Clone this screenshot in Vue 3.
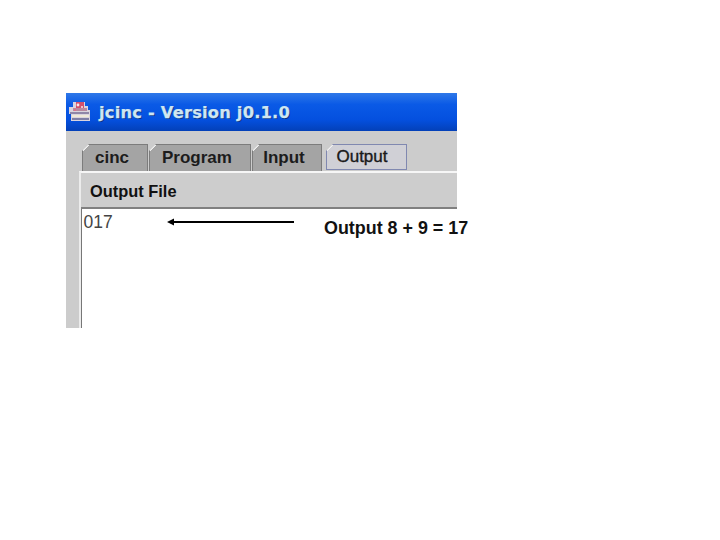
<template>
  <div class="page">
    <div class="window">
      <div class="titlebar">
        <svg class="app-icon" width="24" height="24" viewBox="0 0 24 24">
          <path d="M5 2 H17 V6 H20 V10 H22 V21 H3 V14 H1 V7 H5 Z" fill="#d9d4de" />
          <rect x="8" y="2" width="8" height="6" fill="#d2506c" />
          <rect x="5" y="8" width="14" height="3" fill="#b88aa0" />
          <rect x="2" y="12" width="19" height="2" fill="#8f87a8" />
          <rect x="4" y="15" width="17" height="2" fill="#efe9d8" />
          <rect x="4" y="18" width="17" height="2" fill="#7f7fa6" />
          <circle cx="10" cy="5" r="1.4" fill="#f6e8ec" />
          <circle cx="14" cy="7" r="1" fill="#f6e8ec" />
          <circle cx="7" cy="10" r="1" fill="#e46a86" />
        </svg>
        <span class="title">jcinc - Version j0.1.0</span>
      </div>
      <div class="body">
        <div class="tabs">
          <div v-for="tab in tabs" :key="tab.name" class="tab" :class="{ active: tab.active }" :style="{ width: tab.width + 'px' }">
            {{ tab.name }}
          </div>
        </div>
        <div class="panel">
          <div class="panel-head">Output File</div>
          <div class="output">017</div>
        </div>
      </div>
    </div>
    <svg class="arrow" width="130" height="10" viewBox="0 0 130 10">
      <path d="M0 5 L7 1.5 L7 8.5 Z" fill="#000" />
      <path d="M4 5 H127" stroke="#000" stroke-width="1.8" />
    </svg>
    <div class="caption">Output 8 + 9 = 17</div>
  </div>
</template>

<script setup>
const tabs = [
  { name: "cinc", width: 66 },
  { name: "Program", width: 102 },
  { name: "Input", width: 70 },
  { name: "Output", width: 81, active: true },
];
</script>

<style scoped>
.page {
  position: relative;
  width: 720px;
  height: 540px;
  padding: 93px 0 0 66px;
  box-sizing: border-box;
  background: #fff;
  overflow: hidden;
}
.window {
  width: 391px;
  height: 235px;
  display: flex;
  flex-direction: column;
  background: #cccccc;
}
.titlebar {
  height: 38px;
  flex: none;
  display: flex;
  align-items: center;
  gap: 7px;
  padding: 0 0 0 2px;
  box-sizing: border-box;
  background: linear-gradient(180deg, #2f78e8 0%, #0a5ae6 30%, #0450df 70%, #0340b8 100%);
}
.app-icon {
  flex: none;
}
.title {
  font-family: "DejaVu Sans", sans-serif;
  font-weight: 700;
  font-size: 16.3px;
  letter-spacing: 0.2px;
  white-space: nowrap;
  color: #cfe6f2;
  -webkit-text-stroke: 0.25px #cfe6f2;
  text-shadow: 1px 1px 0 #0a2f80;
}
.body {
  flex: 1;
  display: flex;
  flex-direction: column;
  min-height: 0;
  padding: 13px 0 0 14px;
}
.tabs {
  display: flex;
  height: 27px;
  flex: none;
  padding-left: 2px;
}
.tab {
  box-sizing: border-box;
  height: 27px;
  display: flex;
  align-items: center;
  justify-content: center;
  padding-right: 6px;
  font-family: "Liberation Sans", Arial, sans-serif;
  font-size: 17px;
  font-weight: 700;
  white-space: nowrap;
  color: #1c1c1c;
  background: linear-gradient(135deg, #f0f0f0 6px, #a4a4a4 6px);
  background-origin: border-box;
  border: 1px solid #7c7c7c;
  border-bottom: none;
  clip-path: polygon(7px 0, 100% 0, 100% 100%, 0 100%, 0 7px);
  margin-right: 1px;
}
.tab.active {
  height: 26px;
  margin-left: 3px;
  margin-right: 0;
  padding-right: 9px;
  background: linear-gradient(135deg, #f0f0f0 6px, #d0d0d6 6px);
  background-origin: border-box;
  border: 1px solid #8088b0;
  font-weight: 400;
  font-size: 17px;
  -webkit-text-stroke: 0.35px #111;
}
.panel {
  flex: 1;
  min-height: 0;
  display: flex;
  flex-direction: column;
  margin-left: -1px;
  border-top: 2px solid #f6f6f6;
  border-left: 2px solid #ececec;
}
.panel-head {
  height: 36px;
  flex: none;
  box-sizing: border-box;
  padding: 9px 0 0 9px;
  font-family: "Liberation Sans", Arial, sans-serif;
  font-size: 16.4px;
  font-weight: 700;
  line-height: 19px;
  color: #111;
  background: #cdcdcd;
  border-bottom: 2px solid #808080;
}
.output {
  flex: 1;
  background: #fff;
  border-left: 1.5px solid #777;
  padding: 4px 0 0 1.5px;
  font-family: "Liberation Sans", Arial, sans-serif;
  font-size: 17.5px;
  line-height: 18px;
  color: #444;
}
.arrow {
  position: absolute;
  left: 167px;
  top: 217px;
}
.caption {
  position: absolute;
  left: 324px;
  top: 218px;
  font-family: "Liberation Sans", Arial, sans-serif;
  font-size: 17.9px;
  font-weight: 700;
  line-height: 20px;
  white-space: nowrap;
  color: #111;
}
</style>
